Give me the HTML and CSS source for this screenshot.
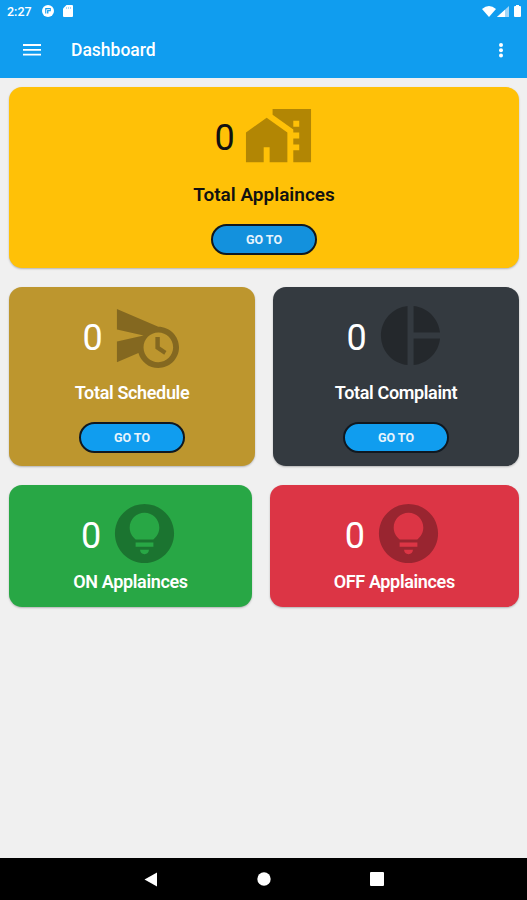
FILE: index.html
```
<!DOCTYPE html>
<html lang="en">
<head>
    <meta charset="UTF-8">
    <meta name="viewport" content="width=device-width, initial-scale=1.0">
    <title>Dashboard</title>
    <link rel="stylesheet" href="styles.css">
</head>
<body>
    <header class="header">
        <div class="status-bar">
            <span class="time">2:27</span>
            <svg class="status-app" width="12" height="12" viewBox="0 0 12 12">
                <circle cx="6" cy="6" r="6" fill="#fff"/>
                <path d="M3.2 3h5.6v3.2H6.4V8.6H3.2z" fill="#109def"/>
                <path d="M4.6 9V4.6H8" fill="none" stroke="#fff" stroke-width=".8"/>
            </svg>
            <svg class="status-card" width="10" height="12" viewBox="0 0 10 12">
                <path d="M3.5 0H9a1 1 0 0 1 1 1v10a1 1 0 0 1-1 1H1a1 1 0 0 1-1-1V3.5z" fill="#fff"/>
                <path d="M3.5 2v2M5.5 2v2M7.5 2v2" stroke="#a8d8f8" stroke-width="1"/>
            </svg>
            <div class="status-right">
                <svg width="14" height="11" viewBox="0 0 14 11">
                    <path d="M0 3Q7-3 14 3L7 11z" fill="#fff"/>
                </svg>
                <svg width="12" height="11" viewBox="0 0 12 11">
                    <path d="M12 0v11H0z" fill="#a5d6f7"/>
                    <path d="M8 3.7V11H0z" fill="#fff"/>
                </svg>
                <svg class="battery" width="7" height="12" viewBox="0 0 7 12">
                    <path d="M2 0h3v1h1a1 1 0 0 1 1 1v9a1 1 0 0 1-1 1H1a1 1 0 0 1-1-1V2a1 1 0 0 1 1-1h1z" fill="#fff"/>
                </svg>
            </div>
        </div>
        <div class="toolbar">
            <svg width="18" height="12" viewBox="0 0 18 12">
                <path d="M0 1h18M0 5.8h18M0 10.6h18" stroke="#fff" stroke-width="1.8"/>
            </svg>
            <h1>Dashboard</h1>
            <svg class="more" width="4" height="15" viewBox="0 0 4 15">
                <circle cx="2" cy="2" r="2" fill="#fff"/>
                <circle cx="2" cy="7.3" r="2" fill="#fff"/>
                <circle cx="2" cy="12.6" r="2" fill="#fff"/>
            </svg>
        </div>
    </header>

    <main class="content">
        <div class="card total">
            <div class="count">
                <span>0</span>
                <svg viewBox="0 0 24 24">
                    <path d="M1 11v10h6v-5h2v5h6V11L8 6z"/>
                    <path d="M10 3v1.97l7 5V11h2v2h-2v2h2v2h-2v4h6V3H10zm9 6h-2V7h2v2z"/>
                </svg>
            </div>
            <h2>Total Applainces</h2>
            <button>GO TO</button>
        </div>

        <div class="row">
            <div class="card schedule">
                <div class="count">
                    <span>0</span>
                    <svg viewBox="0 0 24 24">
                        <path d="M16.5 12.5H15v4l3 2 .75-1.23-2.25-1.52V12.5z"/>
                        <path d="M16 9L2 3v7l9 2-9 2v7l7.27-3.11C10.09 20.83 12.79 23 16 23c3.86 0 7-3.14 7-7s-3.14-7-7-7zm0 12c-2.75 0-4.98-2.22-5-4.97v-.07c.02-2.74 2.25-4.97 5-4.97 2.76 0 5 2.24 5 5S18.76 21 16 21z"/>
                    </svg>
                </div>
                <h2>Total Schedule</h2>
                <button>GO TO</button>
            </div>
            <div class="card complaint">
                <div class="count">
                    <span>0</span>
                    <svg viewBox="0 0 24 24">
                        <path d="M11 2v20c-5.07-.5-9-4.79-9-10s3.93-9.5 9-10zm2.03 0v8.99H22c-.47-4.74-4.24-8.52-8.97-8.99zm0 11.01V22c4.74-.47 8.5-4.25 8.97-8.99h-8.97z"/>
                    </svg>
                </div>
                <h2>Total Complaint</h2>
                <button>GO TO</button>
            </div>
        </div>

        <div class="row">
            <div class="card on">
                <div class="count">
                    <span>0</span>
                    <svg viewBox="0 0 24 24">
                        <path d="M12 2C6.48 2 2 6.48 2 12s4.48 10 10 10 10-4.48 10-10S17.52 2 12 2zm0 17c-.83 0-1.5-.67-1.5-1.5h3c0 .83-.67 1.5-1.5 1.5zm3-2.5H9V15h6v1.5zm-.03-2.5H9.03C7.8 13.09 7 11.64 7 10c0-2.76 2.24-5 5-5s5 2.24 5 5c0 1.64-.8 3.09-2.03 4z"/>
                    </svg>
                </div>
                <h2>ON Applainces</h2>
            </div>
            <div class="card off">
                <div class="count">
                    <span>0</span>
                    <svg viewBox="0 0 24 24">
                        <path d="M12 2C6.48 2 2 6.48 2 12s4.48 10 10 10 10-4.48 10-10S17.52 2 12 2zm0 17c-.83 0-1.5-.67-1.5-1.5h3c0 .83-.67 1.5-1.5 1.5zm3-2.5H9V15h6v1.5zm-.03-2.5H9.03C7.8 13.09 7 11.64 7 10c0-2.76 2.24-5 5-5s5 2.24 5 5c0 1.64-.8 3.09-2.03 4z"/>
                    </svg>
                </div>
                <h2>OFF Applainces</h2>
            </div>
        </div>
    </main>

    <nav class="nav-bar">
        <svg width="14" height="15" viewBox="0 0 14 15"><path d="M13 .5v14L.5 7.5z" fill="#fff"/></svg>
        <svg width="14" height="14" viewBox="0 0 14 14"><circle cx="7" cy="7" r="6.7" fill="#fff"/></svg>
        <svg width="14" height="14" viewBox="0 0 14 14"><rect width="14" height="14" rx="1" fill="#fff"/></svg>
    </nav>
</body>
</html>
```
FILE: styles.css
```
* {
    box-sizing: border-box;
}

body {
    margin: 0;
    height: 900px;
    display: flex;
    flex-direction: column;
    background: #f0f0f0;
    font-family: Roboto, sans-serif;
}

svg {
    display: block;
    flex-shrink: 0;
}

.header {
    height: 77.5px;
    background: #109def;
    color: #fff;
}

.status-bar {
    display: flex;
    align-items: center;
    height: 22px;
    padding: 0 6px 0 7px;
}

.time {
    width: 35px;
    font-size: 12.5px;
    font-weight: 500;
}

.status-card {
    margin-left: 9px;
}

.status-right {
    display: flex;
    align-items: center;
    margin-left: auto;
    gap: 1px;
}

.battery {
    margin-left: 4px;
}

.toolbar {
    display: flex;
    align-items: center;
    height: 56px;
    padding: 0 24px 0 23px;
}

.toolbar h1 {
    margin: 0 0 0 30px;
    font-size: 17.5px;
    font-weight: 500;
}

.more {
    margin-left: auto;
}

.content {
    flex: 1;
    padding: 9px 8px 0 9px;
}

.card {
    display: flex;
    flex-direction: column;
    align-items: center;
    height: 179.5px;
    padding-top: 13px;
    border-radius: 13px;
    color: #fff;
    box-shadow: 0 1px 2px rgba(0, 0, 0, 0.25);
}

.row {
    display: flex;
    justify-content: space-between;
    margin-top: 18.5px;
}

.row .card {
    width: 246px;
}

.count {
    display: flex;
    align-items: center;
    gap: 8px;
    height: 71px;
}

.count span {
    padding-top: 5px;
    font-size: 36px;
    line-height: 40px;
}

.count svg {
    width: 71px;
    height: 71px;
    fill: rgba(0, 0, 0, 0.3);
}

.card h2 {
    margin: 11px 0 0;
    font-size: 18px;
    line-height: 22px;
    font-weight: 600;
    letter-spacing: -0.35px;
}

.card button {
    width: 106px;
    height: 31px;
    margin-top: 18px;
    padding: 0;
    border: 2px solid #101820;
    border-radius: 16px;
    background: #109def;
    color: #e8f4fc;
    font-family: inherit;
    font-size: 12.5px;
    font-weight: 700;
}

.card.total {
    height: 181.5px;
    background: #ffc107;
    color: #111;
}

.total h2 {
    margin-top: 13px;
    font-size: 19px;
    letter-spacing: 0;
}

.total button {
    background: #1391dd;
}

.schedule {
    background: #bd962e;
}

.complaint {
    background: #343a40;
}

.row .on {
    width: 243px;
    height: 122.5px;
    background: #28a745;
}

.row .off {
    width: 249.5px;
    height: 122.5px;
    background: #dc3545;
}

.on h2,
.off h2 {
    margin-top: 2px;
}

.nav-bar {
    display: flex;
    align-items: center;
    justify-content: space-between;
    height: 42px;
    padding: 0 143.5px 0 144px;
    background: #000;
}
```
